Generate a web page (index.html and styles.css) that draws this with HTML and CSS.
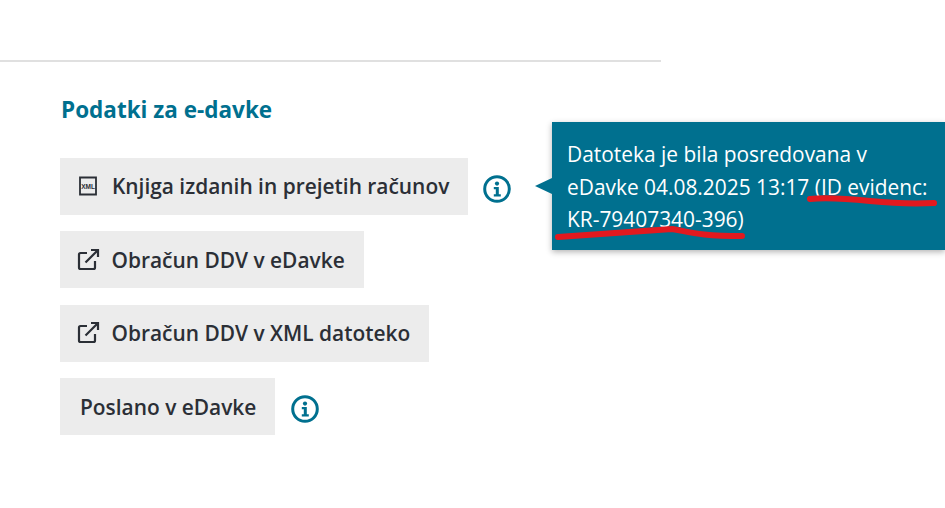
FILE: index.html
```html
<!DOCTYPE html>
<html lang="sl">
<head>
  <meta charset="UTF-8">
  <title>Podatki za e-davke</title>
  <link rel="stylesheet" href="styles.css">
</head>
<body>
  <div class="rule"></div>

  <div class="content">
    <h2 class="title">Podatki za e-davke</h2>

    <div class="row">
      <a class="btn">
        <svg class="btn-icon" width="20" height="20" viewBox="0 0 20 20">
          <path d="M2 1.500h16v17H2z" fill="none" stroke="#2b2f36" stroke-width="1.800"/>
          <text x="10" y="12.500" font-size="6.500" font-family="Liberation Sans, sans-serif" text-anchor="middle" fill="#2b2f36">XML</text>
        </svg>
        Knjiga izdanih in prejetih računov
      </a>
      <svg class="info" viewBox="0 0 28 28">
        <circle cx="14" cy="14" r="12.300" fill="none" stroke="#00708f" stroke-width="3"/>
        <circle cx="14" cy="8.600" r="2.100" fill="#00708f"/>
        <path d="M10.800 12h5v7.200h2v2.200h-7v-2.200h2v-5H10.800z" fill="#00708f"/>
      </svg>
    </div>

    <div class="row">
      <a class="btn">
        <svg class="btn-icon ext" width="24" height="24" viewBox="0 0 24 24">
          <path d="M11 5H4.500A1.500 1.500 0 0 0 3 6.500v13A1.500 1.500 0 0 0 4.500 21h13a1.500 1.500 0 0 0 1.500-1.500V13M9.500 14.500L22 2M15 2h7v7" fill="none" stroke="#2b2f36" stroke-width="2.200"/>
        </svg>
        Obračun DDV v eDavke
      </a>
    </div>

    <div class="row">
      <a class="btn">
        <svg class="btn-icon ext" width="24" height="24" viewBox="0 0 24 24">
          <path d="M11 5H4.500A1.500 1.500 0 0 0 3 6.500v13A1.500 1.500 0 0 0 4.500 21h13a1.500 1.500 0 0 0 1.500-1.500V13M9.500 14.500L22 2M15 2h7v7" fill="none" stroke="#2b2f36" stroke-width="2.200"/>
        </svg>
        Obračun DDV v XML datoteko
      </a>
    </div>

    <div class="row">
      <a class="btn plain">Poslano v eDavke</a>
      <svg class="info" viewBox="0 0 28 28">
        <circle cx="14" cy="14" r="12.300" fill="none" stroke="#00708f" stroke-width="3"/>
        <circle cx="14" cy="8.600" r="2.100" fill="#00708f"/>
        <path d="M10.800 12h5v7.200h2v2.200h-7v-2.200h2v-5H10.800z" fill="#00708f"/>
      </svg>
    </div>
  </div>

  <!-- tooltip odprt nad prvo vrstico -->
  <div class="tooltip">
    <span class="arrow"></span>
    Datoteka je bila posredovana v<br>
    eDavke 04.08.2025 13:17 (ID evidenc:<br>
    KR-79407340-396)
  </div>

  <!-- rdece podcrtano na posnetku -->
  <svg class="marks" width="945" height="508" viewBox="0 0 945 508">
    <path d="M810 199C830 197 850 199 870 201S915 204 934 203M558 237C590 235 630 232 672 229C690 232 700 236 742 236" fill="none" stroke="#e2191f" stroke-width="6" stroke-linecap="round"/>
  </svg>
</body>
</html>
```

FILE: styles.css
```css
body {
  margin: 0;
  height: 508px;
  overflow: hidden;
  background: #fff;
  font-family: "Open Sans", sans-serif;
  color: #2b2f36;
}

.rule {
  width: 661px;
  height: 2px;
  margin-top: 60px;
  background: #e0e0e0;
}

.content {
  padding-left: 60px;
}

.title {
  margin: 33px 0 33.700px 1px;
  font-size: 22.500px;
  line-height: 29px;
  font-weight: 700;
  color: #00708f;
}

.row {
  display: flex;
  align-items: center;
  margin-bottom: 16.500px;
}

.btn {
  display: flex;
  align-items: center;
  height: 57px;
  padding: 0 19px 0 17px;
  background: #ececec;
  font-size: 20.900px;
  font-weight: 600;
}

.btn.plain {
  padding: 0 19px 0 20px;
}

.btn-icon {
  margin-right: 14px;
  margin-left: 1px;
}

.btn-icon.ext {
  margin-right: 12px;
  margin-left: -1.500px;
}

.info {
  width: 28px;
  height: 28px;
  margin-left: 15px;
  margin-top: 5px;
}

.row:last-child .info {
  margin-left: 16px;
}

.tooltip {
  position: absolute;
  left: 552px;
  top: 122px;
  width: 393px;
  height: 128px;
  box-sizing: border-box;
  padding: 16px 0 0 15px;
  background: #00708f;
  box-shadow: 0 2px 6px rgba(0, 0, 0, 0.3);
  color: #fff;
  font-size: 20.900px;
  line-height: 32.500px;
  white-space: nowrap;
}

.arrow {
  position: absolute;
  left: -17px;
  top: 56px;
  border-style: solid;
  border-width: 8px 17px 8px 0;
  border-color: transparent #00708f transparent transparent;
}

.marks {
  position: absolute;
  left: 0;
  top: 0;
}
```
